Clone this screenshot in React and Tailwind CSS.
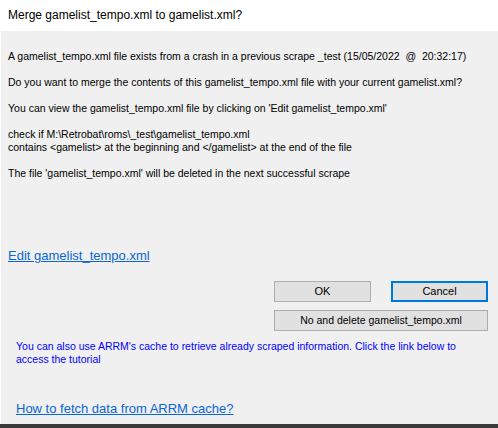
import React from "react";

export default function App() {
  const body = `A gamelist_tempo.xml file exists from a crash in a previous scrape _test (15/05/2022  @  20:32:17)

Do you want to merge the contents of this gamelist_tempo.xml file with your current gamelist.xml?

You can view the gamelist_tempo.xml file by clicking on 'Edit gamelist_tempo.xml'

check if M:\\Retrobat\\roms\\_test\\gamelist_tempo.xml
contains <gamelist> at the beginning and </gamelist> at the end of the file

The file 'gamelist_tempo.xml' will be deleted in the next successful scrape`;

  return (
    <div className="w-[498px] h-[428px] bg-white flex flex-col overflow-hidden font-['Liberation_Sans',Arial,sans-serif]">
      {/* title bar */}
      <div className="h-[31px] shrink-0 pl-2 pt-[7px] text-[12px] leading-[16px] text-black">
        Merge gamelist_tempo.xml to gamelist.xml?
      </div>

      {/* dialog body */}
      <div className="flex-1 ml-px bg-[#f0f0f0] flex flex-col pt-[19px]">
        <div className="pl-[7px] text-[10.5px] leading-[13px] text-black whitespace-pre">
          {body}
        </div>

        <a className="mt-[68px] ml-[7px] self-start text-[13px] leading-[16px] text-[#0a66d4] underline">
          Edit gamelist_tempo.xml
        </a>

        <div className="mt-[17px] pr-[10px] flex flex-col items-end gap-2">
          <div className="flex gap-5">
            <button className="w-[97px] h-[21px] bg-[#e1e1e1] border border-[#adadad] text-[11px] text-black">
              OK
            </button>
            <button className="w-[97px] h-[21px] bg-[#e1e1e1] border-2 border-[#0078d7] text-[11px] text-black">
              Cancel
            </button>
          </div>
          <button className="w-[214px] h-[21px] bg-[#e1e1e1] border border-[#adadad] text-[10.5px] text-black">
            No and delete gamelist_tempo.xml
          </button>
        </div>

        <p className="mt-[9px] pl-[15px] text-[10.5px] leading-[13px] text-[#0000ff]">
          You can also use ARRM's cache to retrieve already scraped information. Click the link below to
          <br />
          access the tutorial
        </p>

        <a className="mt-[35px] ml-[15px] self-start text-[13px] leading-[16px] text-[#0a66d4] underline">
          How to fetch data from ARRM cache?
        </a>
      </div>

      {/* edge of the window behind */}
      <div className="h-[4px] shrink-0 bg-[#3a3a3a]" />
    </div>
  );
}
